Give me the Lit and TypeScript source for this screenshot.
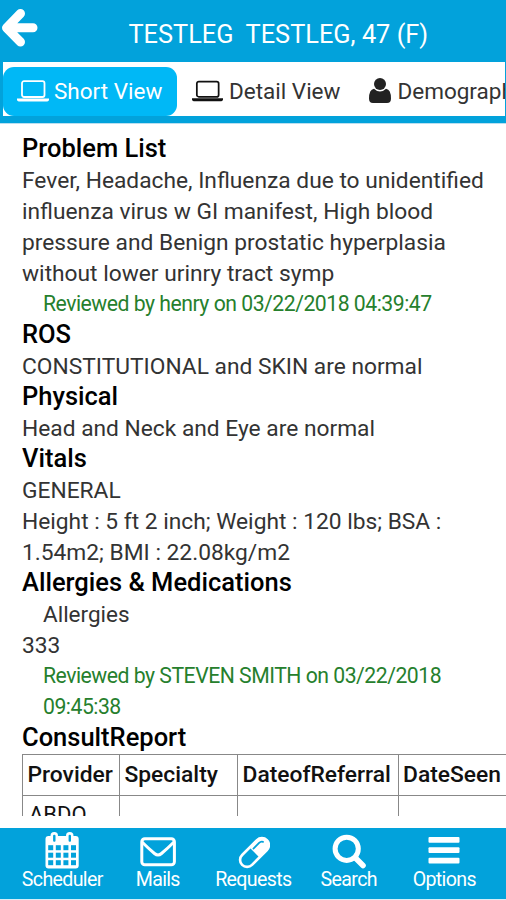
import { LitElement, html, css, svg } from "lit";
import { customElement } from "lit/decorators.js";

const laptop = svg`<svg class="laptop" viewBox="0 0 32 22"><rect x="5" y="1.2" width="22.500" height="15.800" rx="2" fill="none" stroke="currentColor" stroke-width="1.800"/><path d="M0 18.400H32V19.800Q32 21.600 29 21.600H3Q0 21.600 0 19.800z" fill="currentColor"/></svg>`;
const user = svg`<svg class="user" viewBox="0 0 22 25"><circle cx="11" cy="6" r="6" fill="currentColor"/><path d="M5 10.700Q0 11.500 0 20.500Q0 25 4 25H18Q22 25 22 20.500Q22 11.500 17 10.700Q14.500 13.400 11 13.400T5 10.700z" fill="currentColor"/></svg>`;

const columns = [5.7, 13.3, 20.9, 28.5];
const rows = [19.7, 27.2, 34.7];

const calendar = svg`<svg width="34" viewBox="0 0 34 42">
  <rect x="0.500" y="8" width="33.200" height="32.500" rx="3" fill="#fff"/>
  <rect x="5.500" y="4" width="7.500" height="11" rx="3.700" fill="#fff"/>
  <rect x="21" y="4" width="7.500" height="11" rx="3.700" fill="#fff"/>
  <rect x="8.100" y="6.800" width="2.400" height="7" rx="1" fill="#02a2db"/>
  <rect x="23.600" y="6.800" width="2.400" height="7" rx="1" fill="#02a2db"/>
  ${rows.map((y) => columns.map((x) => svg`<rect x=${x - 2.5} y=${y - 2.5} width="5" height="5" fill="#02a2db"/>`))}
</svg>`;
const envelope = svg`<svg width="36" viewBox="0 0 36 42"><rect x="1.800" y="10.800" width="32.600" height="26" rx="3" fill="none" stroke="#fff" stroke-width="3"/><path d="M2 14Q8 20 14.500 25.500Q18 28.500 21.500 25.500Q28 20 34 14" fill="none" stroke="#fff" stroke-width="3"/></svg>`;
const capsule = svg`<svg width="34" viewBox="0 0 34 42"><g transform="translate(18.500 24.500) rotate(-45)"><rect x="-17.500" y="-7" width="35" height="14" rx="7" fill="none" stroke="#fff" stroke-width="2.600"/><path d="M0 -7H10.500A7 7 0 0 1 10.500 7H0z" fill="#fff"/><path d="M2 -3.500H10Q12.500 -3.500 13.500 -1.500" fill="none" stroke="#02a2db" stroke-width="1.800" stroke-linecap="round"/></g></svg>`;
const search = svg`<svg width="34" viewBox="0 0 34 42"><circle cx="14.700" cy="20.800" r="11.600" fill="none" stroke="#fff" stroke-width="5"/><path d="M23.500 30L31 37.500" stroke="#fff" stroke-width="5.600" stroke-linecap="round"/></svg>`;
const menu = svg`<svg width="32" viewBox="0 0 32 42"><rect x="0.500" y="9" width="31" height="5.800" rx="1" fill="#fff"/><rect x="0.500" y="19.300" width="31" height="5.800" rx="1" fill="#fff"/><rect x="0.500" y="29.800" width="31" height="5.800" rx="1" fill="#fff"/></svg>`;

const navItems = [
  { label: "Scheduler", icon: calendar },
  { label: "Mails", icon: envelope },
  { label: "Requests", icon: capsule },
  { label: "Search", icon: search },
  { label: "Options", icon: menu },
];

const line = (text: string, cls = "") => html`<div class="line ${cls}">${text}</div>`;

@customElement("app-root")
export class AppRoot extends LitElement {
  static styles = css`
    :host { display: flex; flex-direction: column; width: 506px; height: 900px; overflow: hidden; background: #fff; font-family: Roboto, sans-serif; color: #333; }
    * { box-sizing: border-box; }
    svg { display: block; flex: none; }
    header { height: 62px; flex: none; background: #02a2db; color: #fff; display: flex; padding: 9px 0 0 1px; }
    .title { font-size: 25.350px; line-height: 30px; margin: 9.500px 0 0 90.500px; white-space: pre; }
    .tabs { height: 62px; flex: none; background: #02a2db; padding: 0 1px 7px 3px; border-bottom: 1px solid #b9dff0; }
    .strip { height: 54px; background: #fff; display: flex; align-items: center; overflow: hidden; white-space: nowrap; }
    .tab { height: 49px; flex: none; display: flex; align-items: center; font-size: 22.500px; margin-top: 5px; }
    .tab span { margin-top: -2px; }
    .on { width: 174px; background: #00b8f6; color: #fff; border-radius: 11px; padding-left: 14px; }
    .laptop { width: 32px; height: 22px; margin: -2px 5px 0 0; }
    .detail { margin-left: 15px; }
    .detail .laptop { width: 31px; margin-right: 6px; color: #111; }
    .user { width: 22px; height: 25px; margin: -2px 6px 0 0; color: #222; }
    .demo { margin-left: 29px; }
    main { height: 692px; flex: none; overflow: hidden; padding: 9px 0 0 22px; font-size: 22.750px; line-height: 31px; white-space: nowrap; }
    h2 { margin: 0; font-size: 25.500px; line-height: 30px; height: 31px; font-weight: 500; color: #000; }
    .line { height: 31px; line-height: 34px; }
    .in { padding-left: 21px; font-size: 22.500px; line-height: 32px; }
    .green { color: #26802d; font-size: 21.200px; letter-spacing: -0.490px; }
    .grid { display: grid; grid-template-columns: 97px 118px 160.500px 125.500px; width: 501px; border: solid #888; border-width: 1px 0 0 1px; margin-top: 1px; }
    .cell { border: solid #888; border-width: 0 1px 1px 0; padding-left: 4.500px; height: 41px; line-height: 40px; font-weight: 500; font-size: 22.800px; color: #111; }
    .cell.data { font-weight: 400; font-size: 22px; line-height: 38px; padding-left: 6px; }
    footer { margin-top: auto; height: 72px; flex: none; background: #02a2db; border-bottom: 1px solid #d5edf7; display: flex; padding-left: 14.500px; color: #fff; font-size: 19.600px; }
    .nav { display: flex; flex-direction: column; align-items: center; width: 95.500px; flex: none; }
    .nav svg { height: 42px; }
    .nav span { line-height: 20px; letter-spacing: -0.650px; }
  `;

  render() {
    return html`
      <header>
        <svg width="37" height="38" viewBox="0 0 37 38"><path d="M19.500 4.500L5.500 18.800L19.500 33M8 18.800H32" fill="none" stroke="#fff" stroke-width="9" stroke-linecap="round" stroke-linejoin="round"/></svg>
        <div class="title">TESTLEG  TESTLEG, 47 (F)</div>
      </header>
      <div class="tabs"><div class="strip">
        <div class="tab on">${laptop}<span>Short View</span></div>
        <div class="tab detail">${laptop}<span>Detail View</span></div>
        <div class="tab demo">${user}<span>Demographics</span></div>
      </div></div>
      <main>
        <h2>Problem List</h2>
        ${line("Fever, Headache, Influenza due to unidentified")}
        ${line("influenza virus w GI manifest, High blood")}
        ${line("pressure and Benign prostatic hyperplasia")}
        ${line("without lower urinry tract symp")}
        ${line("Reviewed by henry on 03/22/2018 04:39:47", "in green")}
        <h2>ROS</h2>
        ${line("CONSTITUTIONAL and SKIN are normal")}
        <h2>Physical</h2>
        ${line("Head and Neck and Eye are normal")}
        <h2>Vitals</h2>
        ${line("GENERAL")}
        ${line("Height : 5 ft 2 inch; Weight : 120 lbs; BSA :")}
        ${line("1.54m2; BMI : 22.08kg/m2")}
        <h2>Allergies &amp; Medications</h2>
        ${line("Allergies", "in")}
        ${line("333")}
        ${line("Reviewed by STEVEN SMITH on 03/22/2018", "in green")}
        ${line("09:45:38", "in green")}
        <h2>ConsultReport</h2>
        <div class="grid">
          ${["Provider", "Specialty", "DateofReferral", "DateSeen"].map((t) => html`<div class="cell">${t}</div>`)}
          ${["ABDO", "", "", ""].map((t) => html`<div class="cell data">${t}</div>`)}
        </div>
      </main>
      <footer>${navItems.map((n) => html`<div class="nav">${n.icon}<span>${n.label}</span></div>`)}</footer>`;
  }
}
